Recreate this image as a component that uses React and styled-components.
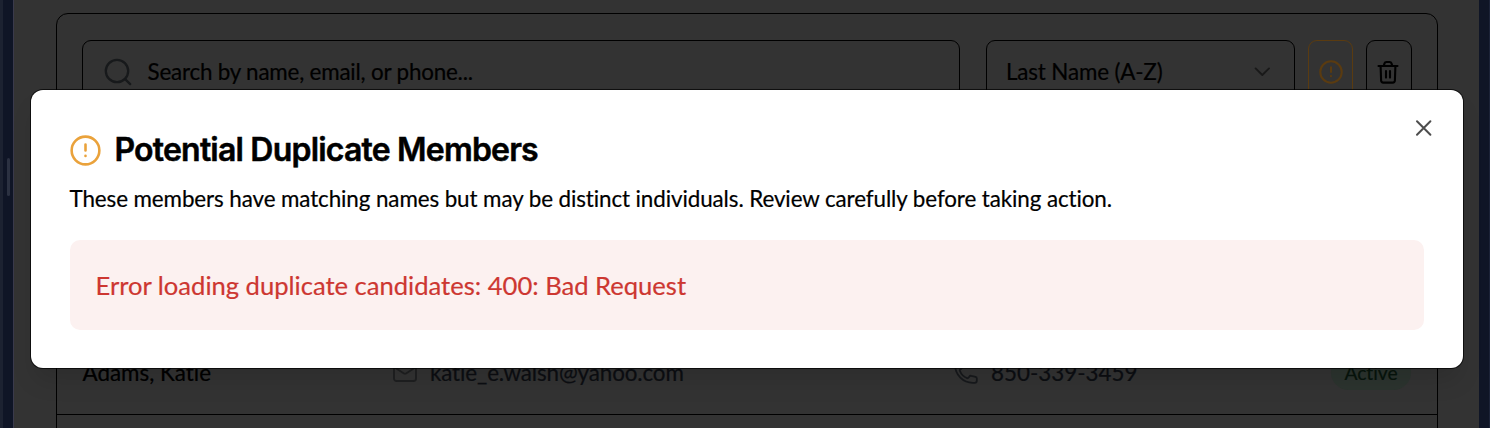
import React from "react";
import styled, { createGlobalStyle } from "styled-components";

const Global = createGlobalStyle`
  *, *::before, *::after { box-sizing: border-box; }
  html, body { margin: 0; background: #333333; overflow: hidden; }
  body {
    font-family: Lato, "Liberation Sans", sans-serif;
    font-variant-ligatures: none;
    -webkit-text-stroke: 0.2px currentColor;
    color: #000;
  }
  h2, p { margin: 0; }
`;

const Page = styled.div`
  position: relative;
  display: flex;
  width: 1490px;
  height: 428px;
  overflow: hidden;
  background: #333333;
`;

const SideRail = styled.aside`
  display: flex;
  align-items: flex-start;
  flex: none;
  width: 14px;
  border-left: 3px solid #1c2231;
  border-right: 1px solid #3a3a4c;
  background: #0f1526;
`;

const RailHandle = styled.span`
  width: 3px;
  height: 38px;
  margin: 158px 0 0 4px;
  border-radius: 2px;
  background: #2b3141;
`;

const RightRail = styled.aside`
  flex: none;
  width: 11px;
  border-right: 1px solid #1c2338;
  background: #0f1526;
`;

const Main = styled.main`
  flex: 1;
  min-width: 0;
  padding: 13px 41px 0 42px;
`;

const Card = styled.section`
  display: flex;
  flex-direction: column;
  height: 460px;
  border: 1px solid #000;
  border-radius: 12px;
`;

const Toolbar = styled.div`
  display: flex;
  height: 318px;
  padding: 26px 25px 0;
  align-items: flex-start;
`;

const Field = styled.div`
  display: flex;
  align-items: center;
  flex: none;
  width: ${(p) => p.$width}px;
  height: 64px;
  margin-right: ${(p) => p.$gap}px;
  padding: 0 ${(p) => p.$padRight || 0}px 0 ${(p) => p.$padLeft}px;
  border: 1px solid #000;
  border-radius: 9px;
  font-size: 22.4px;
  white-space: nowrap;
`;

const FieldText = styled.span`
  flex: 1;
  margin-left: ${(p) => p.$indent || 0}px;
  padding-bottom: 2px;
  letter-spacing: ${(p) => p.$track || 0}px;
`;

const IconButton = styled.button`
  display: flex;
  align-items: center;
  justify-content: center;
  flex: none;
  width: ${(p) => p.$width}px;
  height: 64px;
  margin: 0 ${(p) => p.$gap || 0}px 0 0;
  padding: 0 ${(p) => p.$inset || 0}px 1px 0;
  border: 1px solid ${(p) => p.$color};
  border-radius: 9px;
  background: none;
  color: ${(p) => p.$color};
`;

const Row = styled.div`
  display: grid;
  grid-template-columns: 310px 561px 1fr auto;
  align-items: center;
  height: 83px;
  padding: 0 26px 2px 25.5px;
  border-bottom: 1px solid #000;
  font-size: 22.4px;
`;

const Cell = styled.div`
  display: flex;
  align-items: center;
  gap: ${(p) => p.$gap || 0}px;
  color: ${(p) => p.$color || "#000"};
  letter-spacing: ${(p) => p.$track || 0}px;
  white-space: nowrap;
`;

const Badge = styled.span`
  display: flex;
  align-items: center;
  justify-content: center;
  width: 80px;
  height: 35px;
  border-radius: 18px;
  background: #2c342f;
  color: #07140c;
  font-size: 19.3px;
  letter-spacing: -0.05px;
`;

const Dialog = styled.div`
  position: absolute;
  top: 90px;
  left: 31px;
  width: 1432px;
  height: 278px;
  padding: 39px 39px 0 38.5px;
  border-radius: 12px;
  background: #fff;
  box-shadow: 0 0 0 1px rgba(0, 0, 0, 0.7), 0 16px 24px -4px rgba(0, 0, 0, 0.12);
`;

const DialogHeader = styled.header`
  display: flex;
  align-items: center;
  gap: 14px;
  height: 42px;
`;

const TitleIcon = styled.span`
  display: flex;
  padding-top: 1px;
  color: #eaa23b;
`;

const Title = styled.h2`
  font: 600 32px/42px Inter, "Liberation Sans", sans-serif;
  letter-spacing: -0.8px;
  -webkit-text-stroke-width: 0.5px;
  white-space: nowrap;
`;

const Description = styled.p`
  margin-top: 12px;
  font-size: 22.4px;
  line-height: 32px;
  letter-spacing: -0.095px;
  white-space: nowrap;
`;

const ErrorBox = styled.div`
  display: flex;
  align-items: center;
  height: 90px;
  margin-top: 25px;
  padding: 0 26px;
  border-radius: 10px;
  background: #fcf1f0;
  color: #cd3731;
  font-size: 25.6px;
  letter-spacing: -0.01px;
  white-space: nowrap;
`;

const CloseButton = styled.button`
  position: absolute;
  top: 28px;
  right: 29px;
  display: flex;
  padding: 0;
  border: 0;
  background: none;
  color: #4d4d4d;
`;

const Icon = styled.svg`
  display: block;
  flex: none;
  fill: none;
  stroke: currentColor;
  stroke-linecap: round;
  stroke-linejoin: round;
`;

const AlertIcon = ({ size, stroke }) => (
  <Icon width={size} height={size} viewBox="0 0 30 30" strokeWidth={stroke}>
    <circle cx="15" cy="15" r="13.4" />
    <path d="M15 9.2v5.8M15 20v.3" />
  </Icon>
);

export default function App() {
  return (
    <>
      <Global />
      <Page>
        <SideRail><RailHandle /></SideRail>
        <Main>
          <Card>
            <Toolbar>
              <Field $width={878} $gap={26} $padLeft={20}>
                <Icon width="30" height="30" viewBox="0 0 30 30" strokeWidth="2.3" color="#17191b">
                  <circle cx="14" cy="14" r="11.2" />
                  <path d="m22.1 22.1 5.1 5" />
                </Icon>
                <FieldText $indent={14.5} $track={-0.2}>Search by name, email, or phone...</FieldText>
              </Field>
              <Field $width={309} $gap={13} $padLeft={19} $padRight={24}>
                <FieldText $track={-0.15}>Last Name (A-Z)</FieldText>
                <Icon width="16" height="10" viewBox="0 0 16 10" strokeWidth="1.9" color="#191919">
                  <path d="m1.6 1.4 6.7 6.6L15 1.4" />
                </Icon>
              </Field>
              <IconButton $width={45} $gap={13} $color="#5a3b10" aria-label="Duplicates">
                <AlertIcon size={24} stroke={2.6} />
              </IconButton>
              <IconButton $width={46} $inset={2} $color="#000" aria-label="Delete">
                <Icon width="22" height="24" viewBox="0 0 22 24" strokeWidth="2.1">
                  <path d="M1.5 6h19M3.6 6l.5 14.5a2.2 2.2 0 0 0 2.2 2.1h9.4a2.2 2.2 0 0 0 2.2-2.1L18.4 6M6.7 6l.8-2.6A2 2 0 0 1 9.4 2h3.2a2 2 0 0 1 1.9 1.4l.8 2.6M9 11v6.6M13 11v6.6" />
                </Icon>
              </IconButton>
            </Toolbar>
            <Row>
              <Cell>Adams, Katie</Cell>
              <Cell $gap={13.5} $color="#0c0e12" $track={-0.12}>
                <Icon width="24" height="20" viewBox="0 0 24 20" strokeWidth="1.8" color="#1e1f20">
                  <rect x="1" y="1" width="22" height="18" rx="2.5" />
                  <path d="m1 5 9.600 6.200a2.500 2.500 0 0 0 2.800 0L23 5" />
                </Icon>
                katie_e.walsh@yahoo.com
              </Cell>
              <Cell $gap={13.5} $color="#0c0e12">
                <Icon width="24" height="24" viewBox="0 0 24 24" strokeWidth="1.8" color="#17191c">
                  <path d="M1.2 5.3c0 9.6 7.9 17.5 17.5 17.5h2.1a2 2 0 0 0 2-2v-2.3c0-.8-.5-1.4-1.3-1.6l-4.3-1.1c-.7-.2-1.4.1-1.8.7l-1 1.3c-.3.4-.8.5-1.3.4a13 13 0 0 1-7.3-7.4c-.2-.5 0-1 .4-1.3l1.3-1c.6-.4.8-1.1.7-1.8L7.1 2.4A1.7 1.7 0 0 0 5.5 1.2H3.2a2 2 0 0 0-2 2z" />
                </Icon>
                850-339-3459
              </Cell>
              <Badge>Active</Badge>
            </Row>
          </Card>
        </Main>
        <RightRail />
        <Dialog role="dialog">
          <DialogHeader>
            <TitleIcon><AlertIcon size={31} stroke={2.5} /></TitleIcon>
            <Title>Potential Duplicate Members</Title>
          </DialogHeader>
          <Description>These members have matching names but may be distinct individuals. Review carefully before taking action.</Description>
          <ErrorBox>Error loading duplicate candidates: 400: Bad Request</ErrorBox>
          <CloseButton aria-label="Close">
            <Icon width="20" height="20" viewBox="0 0 20 20" strokeWidth="2"><path d="m3 3.300 13.400 13.400M16.400 3.300 3 16.700" /></Icon>
          </CloseButton>
        </Dialog>
      </Page>
    </>
  );
}
